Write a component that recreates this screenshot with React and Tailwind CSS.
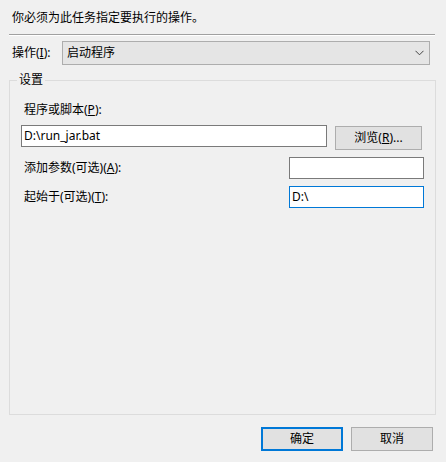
import React from "react";

const font = "font-['Noto_Sans','Noto_Sans_CJK_SC',sans-serif]";

function Key({ children }) {
  return <u className="underline underline-offset-[1px] decoration-1">{children}</u>;
}

function Field({ value = "", focused = false, className = "" }) {
  return (
    <div
      className={`h-[22px] bg-white border flex items-center pl-[2px] text-[12px] text-black ${
        focused ? "border-[#0078d7]" : "border-[#7a7a7a]"
      } ${className}`}
    >
      {value}
    </div>
  );
}

function Button({ children, primary = false, className = "" }) {
  return (
    <button
      className={`h-6 bg-[#e1e1e1] flex items-center justify-center text-[12px] text-black ${
        primary ? "border-2 border-[#0078d7]" : "border border-[#adadad]"
      } ${className}`}
    >
      {children}
    </button>
  );
}

export default function App() {
  return (
    <div className={`w-[446px] h-[462px] bg-[#f0f0f0] text-[12px] text-black ${font} flex flex-col`}>
      <div className="pt-[10px] pl-[12px] h-[26px] leading-4">你必须为此任务指定要执行的操作。</div>

      <div className="mt-[8px] ml-[9px] w-[426px] h-[2px] border-t border-[#a0a0a0] border-b border-b-white" />

      <div className="mt-[5px] flex items-center h-6">
        <span className="pl-[12px] w-[62px] leading-4">
          操作(<Key>I</Key>):
        </span>
        <div className="w-[368px] h-6 bg-[#e5e5e5] border border-[#adadad] flex items-center justify-between pl-[4px] pr-[5px]">
          <span>启动程序</span>
          <svg width="9" height="6" viewBox="0 0 9 6" fill="none">
            <path d="M0.5 0.8 L4.5 4.8 L8.5 0.8" stroke="#444" strokeWidth="1" />
          </svg>
        </div>
      </div>

      <div className="relative mt-[15px] ml-[9px] w-[427px] h-[335px] border border-[#dcdcdc]">
        <span className="absolute -top-[9px] left-[7px] px-[2px] bg-[#f0f0f0] leading-4">设置</span>

        <div className="pt-[21px] pl-[14px] leading-4">
          程序或脚本(<Key>P</Key>):
        </div>
        <div className="mt-[7px] ml-[11px] flex items-start gap-[8px]">
          <Field value="D:\run_jar.bat" className="w-[306px]" />
          <Button className="mt-[1px] w-[87px]">
            浏览(<Key>R</Key>)...
          </Button>
        </div>

        <div className="mt-[7px] flex items-center h-[22px]">
          <span className="pl-[14px] w-[279px] leading-4">
            添加参数(可选)(<Key>A</Key>):
          </span>
          <Field className="w-[135px]" />
        </div>
        <div className="mt-[7px] flex items-center h-[22px]">
          <span className="pl-[14px] w-[279px] leading-4">
            起始于(可选)(<Key>T</Key>):
          </span>
          <Field value="D:\" focused className="w-[135px]" />
        </div>
      </div>

      <div className="mt-[12px] flex justify-end gap-[8px] pr-[13px]">
        <Button primary className="w-[82px]">确定</Button>
        <Button className="w-[82px]">取消</Button>
      </div>
    </div>
  );
}
